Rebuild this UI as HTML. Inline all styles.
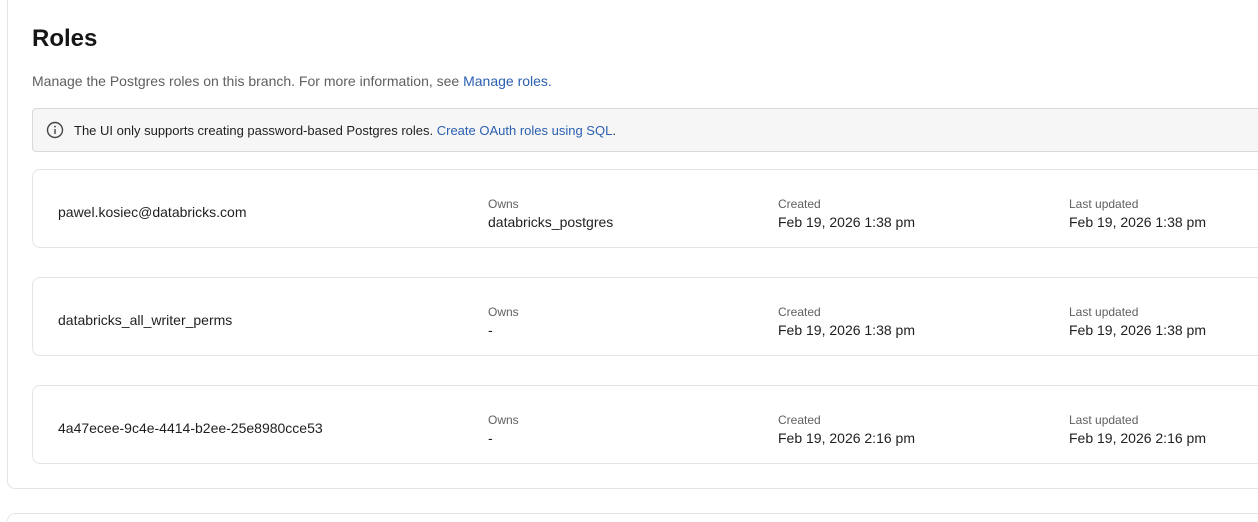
<!DOCTYPE html>
<html style="overflow:hidden;height:522px"><head><style>
body{margin:0;width:1258px;height:522px;background:#fff;font-family:"Liberation Sans",sans-serif;overflow:hidden;position:relative;color:#1f1f1f}
.outer{position:absolute;left:7px;top:-10px;width:1270px;height:497px;border:1px solid #e4e4e4;border-radius:8px}
.outer2{position:absolute;left:7px;top:513px;width:1270px;height:7px;border:1px solid #e4e4e4;border-bottom:none;border-radius:8px 8px 0 0}
h1{position:absolute;left:32px;top:25px;margin:0;font-size:24px;font-weight:bold;color:#161616}
.desc{position:absolute;left:32px;top:73px;font-size:14px;color:#5f5f5f}
a{color:#2a5fb0;text-decoration:none}
.alert{position:absolute;left:32px;top:108px;width:1240px;height:42px;background:#f6f6f6;border:1px solid #d9d9d9;border-radius:4px;font-size:13px;color:#1f1f1f}
.alert span{position:absolute;left:41px;top:14px}
.alert svg{position:absolute;left:13px;top:12px}
.row{position:absolute;left:32px;width:1240px;height:77px;border:1px solid #e4e4e4;border-radius:8px}
.name{position:absolute;left:25px;top:34px;font-size:14px}
.col{position:absolute;top:27px}
.lbl{font-size:12px;color:#5f5f5f}
.val{font-size:14px;margin-top:3px}
</style></head><body>
<div class="outer"></div><div class="outer2"></div>
<h1>Roles</h1>
<div class="desc">Manage the Postgres roles on this branch. For more information, see <a>Manage roles.</a></div>
<div class="alert"><svg width="18" height="18" viewBox="0 0 18 18"><circle cx="9" cy="9" r="7.5" fill="none" stroke="#444" stroke-width="1.4"/><rect x="8.3" y="8" width="1.4" height="5" fill="#444"/><circle cx="9" cy="5.6" r="0.9" fill="#444"/></svg><span>The UI only supports creating password-based Postgres roles. <a>Create OAuth roles using SQL</a>.</span></div>

<div class="row" style="top:169px"><div class="name">pawel.kosiec@databricks.com</div>
<div class="col" style="left:455px"><div class="lbl">Owns</div><div class="val">databricks_postgres</div></div>
<div class="col" style="left:745px"><div class="lbl">Created</div><div class="val">Feb 19, 2026 1:38 pm</div></div>
<div class="col" style="left:1036px"><div class="lbl">Last updated</div><div class="val">Feb 19, 2026 1:38 pm</div></div></div>

<div class="row" style="top:277px"><div class="name">databricks_all_writer_perms</div>
<div class="col" style="left:455px"><div class="lbl">Owns</div><div class="val">-</div></div>
<div class="col" style="left:745px"><div class="lbl">Created</div><div class="val">Feb 19, 2026 1:38 pm</div></div>
<div class="col" style="left:1036px"><div class="lbl">Last updated</div><div class="val">Feb 19, 2026 1:38 pm</div></div></div>

<div class="row" style="top:385px"><div class="name">4a47ecee-9c4e-4414-b2ee-25e8980cce53</div>
<div class="col" style="left:455px"><div class="lbl">Owns</div><div class="val">-</div></div>
<div class="col" style="left:745px"><div class="lbl">Created</div><div class="val">Feb 19, 2026 2:16 pm</div></div>
<div class="col" style="left:1036px"><div class="lbl">Last updated</div><div class="val">Feb 19, 2026 2:16 pm</div></div></div>
</body></html>
